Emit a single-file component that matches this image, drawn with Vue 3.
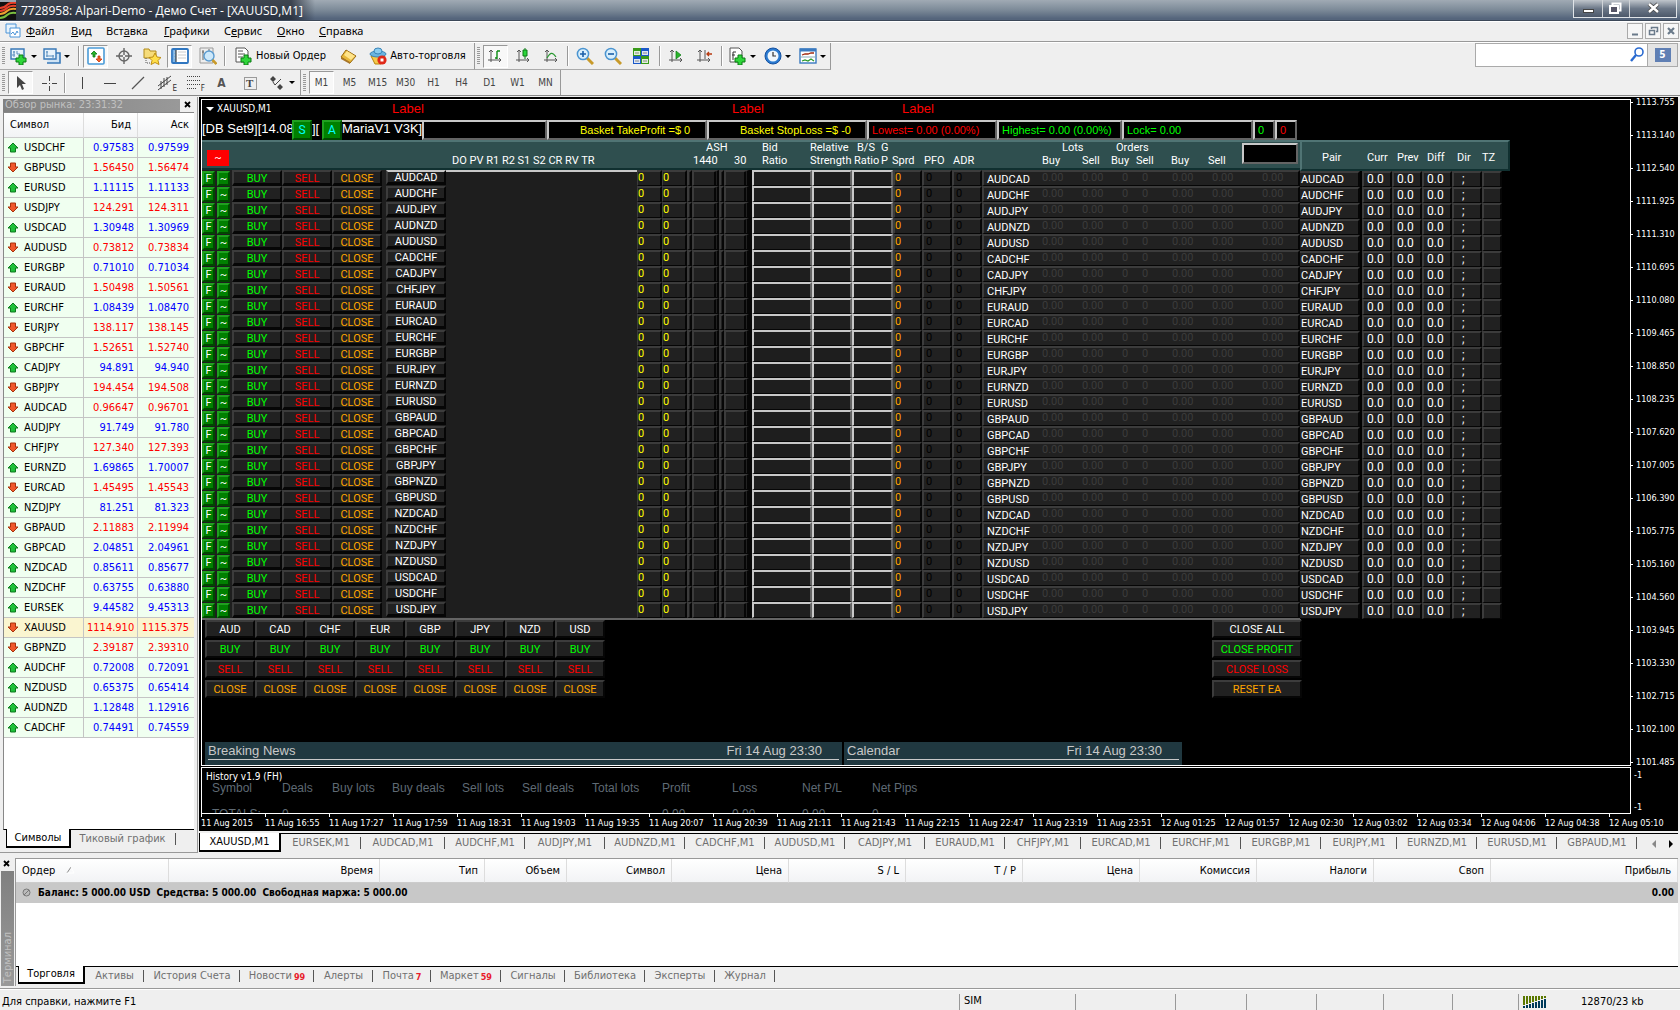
<script setup>
const menu = [
  ['', 'Ф', 'айл', 45], ['', 'В', 'ид', 35], ['Вст', 'а', 'вка', 58], ['', 'Г', 'рафики', 60],
  ['С', 'е', 'рвис', 53], ['', 'О', 'кно', 42], ['', 'С', 'правка', 60],
]

const axes = '<path d="M4 15V3M2 5l2-2 2 2M1 13h13M12 11l2 2-2 2" fill="none" stroke="#555" stroke-width="1"/>'
const plus = '<path d="M9 8h4v3h3v4h-3v3H9v-3H6v-4h3z" fill="#2fd53a" stroke="#0a7a12" stroke-width="1"/>'
const icons = {
  newChart: '<path d="M1 2h13v10H1z" fill="#e8f3fb" stroke="#3a7ab8" stroke-width="1.4"/><path d="M4 4v6M3 5h2M2 8h3M7 4v3h3" stroke="#5a8fbf" fill="none"/>' + plus,
  profiles: '<path d="M6 6h11v10H4" fill="#cfe3f4" stroke="#3a7ab8" stroke-width="1.6"/><path d="M1 2h12v10H1z" fill="#e8f3fb" stroke="#3a7ab8" stroke-width="1.4"/><path d="M3 5h2M4 4v6M3 9h8M10 8v3" stroke="#5a8fbf" fill="none"/>',
  market: '<rect x="1" y="1" width="16" height="16" rx="1" fill="#fff" stroke="#4a9bd8" stroke-width="1.6"/><path d="M7 4l3 3H8v3H6V7H4z" fill="#2ab52a" stroke="#0a7a12" stroke-width=".8"/><path d="M12 15l3-3h-2V9h-2v3H9z" fill="#f0642a" stroke="#c83208" stroke-width=".8"/>',
  cross: '<circle cx="9" cy="9" r="5" fill="none" stroke="#666" stroke-width="1.4"/><path d="M9 1v7M9 10v7M1 9h7M10 9h7" stroke="#666" stroke-width="1.4"/>',
  navigator: '<path d="M1 2h5l1 2h6v7H1z" fill="#f6dc7a" stroke="#b08a1a"/><path d="M3 11v5h4" stroke="#555" stroke-dasharray="1 1" fill="none"/><path d="M12 6l2 4 4 .5-3 3 1 4-4-2-4 2 1-4-3-3 4-.5z" fill="#ffdf4a" stroke="#b8860b" stroke-width=".9"/>',
  terminal: '<rect x="1" y="2" width="16" height="14" rx="1" fill="#fff" stroke="#2f76c0" stroke-width="1.8"/><path d="M2 3h3v12H2z" fill="#7ab4e8"/><path d="M3 5h1M3 8h1M3 11h1M7 5h8M7 8h8M7 11h8" stroke="#ccc"/><path d="M5 3v12" stroke="#222"/>',
  tester: '<path d="M1 1h13v15H1z" fill="#eee" stroke="#999"/><path d="M4 3v10M3 5h2M10 2v5" stroke="#666"/><circle cx="10" cy="9" r="5" fill="#cde8fa" stroke="#5a9bd0" stroke-width="1.4"/><path d="M13.500 13l4 4" stroke="#c89a2a" stroke-width="2.6"/>',
  order: '<path d="M1 1h9l3 3v11H1z" fill="#fff" stroke="#555"/><path d="M3 4h5M3 7h7M3 10h5" stroke="#555"/>' + plus,
  editor: '<path d="M2 10l5-7 10 6-6 7z" fill="#e8b83a" stroke="#9a6a10"/><path d="M5 8l3-4 8 5-4 4z" fill="#ffe48a"/><path d="M2 10v2l9 5v-2z" fill="#a8762a"/>',
  auto: '<path d="M2 9h14l-4 8H6z" fill="#f4c84a" stroke="#b8860b"/><ellipse cx="9" cy="7" rx="8" ry="3" fill="#6ab4e0" stroke="#3a84b8"/><ellipse cx="9" cy="4" rx="4" ry="3" fill="#8accf0" stroke="#3a84b8"/><circle cx="13" cy="13" r="4.600" fill="#e02818"/><path d="M11.500 11.500h3v3h-3z" fill="#fff"/>',
  bars: axes + '<path d="M10 4v8M10 4h3M8 11h2" stroke="#0a8a12" stroke-width="1.4" fill="none"/>',
  candles: axes + '<path d="M10 1v11" stroke="#0a7a12"/><path d="M8 3h4v6H8z" fill="#2ad53a" stroke="#0a7a12"/>',
  line: axes + '<path d="M4 11c3-5 5-7 9-1" stroke="#2a9a32" stroke-width="1.2" fill="none"/>',
  zoomIn: '<path d="M11 11l6 6" stroke="#c89a2a" stroke-width="3"/><circle cx="7" cy="7" r="5.600" fill="#d8effc" stroke="#4a94d0" stroke-width="1.500"/><path d="M4 7h6M7 4v6" stroke="#1a5fa8" stroke-width="1.600"/>',
  zoomOut: '<path d="M11 11l6 6" stroke="#c89a2a" stroke-width="3"/><circle cx="7" cy="7" r="5.600" fill="#d8effc" stroke="#4a94d0" stroke-width="1.500"/><path d="M4 7h6" stroke="#1a5fa8" stroke-width="1.600"/>',
  tile: '<path d="M1 1h8v8H1zM9 9h8v8H9z" fill="#3a9a1a"/><path d="M9 1h8v8H9zM1 9h8v8H1z" fill="#1a58c8"/><path d="M2 4h6v4H2zM10 4h6v4h-6zM2 12h6v4H2zM10 12h6v4h-6z" fill="#fff" opacity=".85"/><path d="M3 6h4M11 6h4M3 14h4M11 14h4" stroke="#888"/>',
  scroll: axes + '<path d="M8 4l5 4-5 4z" fill="#2ab52a" stroke="#0a7a12" stroke-width=".7"/>',
  shift: axes + '<path d="M9 3v9" stroke="#555"/><path d="M16 7h-5M13 5l-2 2 2 2" stroke="#b83a10" stroke-width="1.400" fill="none"/>',
  indicators: '<path d="M1 1h9l3 3v11H1z" fill="#fff" stroke="#555"/><path d="M4 13V5h3M3 8h3" stroke="#333" fill="none"/>' + plus,
  clock: '<circle cx="9" cy="9" r="8" fill="#2a7ad0" stroke="#1450a0"/><circle cx="9" cy="9" r="5.500" fill="#eef6fc"/><path d="M9 5v4h3" stroke="#333" stroke-width="1.200" fill="none"/>',
  templates: '<rect x="1" y="2" width="16" height="14" fill="#fff" stroke="#3a7ac0" stroke-width="1.400"/><path d="M1 3h16" stroke="#3a7ac0" stroke-width="3"/><path d="M3 8l3-1h3l3-1h3" stroke="#a02a10" stroke-width="1.300" fill="none"/><path d="M1 10h16" stroke="#8ab"/><path d="M3 14l3-1 3 1 3-2 3 2" stroke="#2a9a2a" stroke-width="1.200" fill="none"/>',
  cursor: '<path d="M5 2v12l3-3 2 5 2-1-2-5h4z" fill="#444"/>',
  thinCross: '<path d="M9.500 2v5M9.500 12v5M2 9.500h5M12 9.500h5M9 9.500h1" stroke="#444"/>',
  vline: '<path d="M9.500 3v12" stroke="#444"/>',
  hline: '<path d="M3 9.500h12" stroke="#444"/>',
  trend: '<path d="M3 15L15 3" stroke="#555" stroke-width="1.200"/>',
  channel: '<path d="M1 12L14 2M1 16L14 6M4 7v8M7 4v9M10 3v8" stroke="#444"/>',
  fibo: '<path d="M2 2.500h14M2 6.500h14M2 10.500h14M2 14.500h9" stroke="#444" stroke-dasharray="1 1"/>',
  textBox: '<rect x="3.500" y="3.500" width="12" height="12" fill="none" stroke="#444" stroke-dasharray="1 1"/>',
  arrows: '<path d="M5 2l3 3-3 3-3-3zM12 10l3 3-3 3-3-3z" fill="#444"/><path d="M5 8l2 3 6-6" stroke="#444" fill="none"/>',
}
const group1 = [
  { i: 'newChart', w: 30, drop: 1 }, { i: 'profiles', w: 31, drop: 1 }, { sep: 3 },
  { i: 'market', w: 25, on: 1 }, { i: 'cross', w: 25 }, { i: 'navigator', w: 25 }, { i: 'terminal', w: 25, on: 1 }, { i: 'tester', w: 25 }, { sep: 1 },
  { i: 'order', w: 103, t: 'Новый Ордер' }, { i: 'editor', w: 25 }, { i: 'auto', w: 109, t: 'Авто-торговля' },
]
const group2 = [
  { i: 'bars', w: 25, on: 1 }, { i: 'candles', w: 25 }, { i: 'line', w: 25 }, { sep: 0 },
  { i: 'zoomIn', w: 25 }, { i: 'zoomOut', w: 25 }, { i: 'tile', w: 25 }, { sep: 3 },
  { i: 'scroll', w: 25 }, { i: 'shift', w: 25 }, { sep: 1 },
  { i: 'indicators', w: 32, drop: 1 }, { i: 'clock', w: 32, drop: 1 }, { i: 'templates', w: 32, drop: 1 },
]
const group3 = [
  { i: 'cursor', w: 25, on: 1 }, { i: 'thinCross', w: 25 }, { sep: 0 },
  { i: 'vline', w: 25 }, { i: 'hline', w: 25 }, { i: 'trend', w: 25 }, { i: 'channel', w: 25, s: 'E' },
  { i: 'fibo', w: 25, s: 'F' }, { g: 'A', w: 25 }, { i: 'textBox', w: 25, o: 'T' }, { i: 'arrows', w: 33, drop: 1 },
]
const frames = ['M1', 'M5', 'M15', 'M30', 'H1', 'H4', 'D1', 'W1', 'MN']

const quotes = `USDCHF u 0.97583 0.97599
GBPUSD d 1.56450 1.56474
EURUSD u 1.11115 1.11133
USDJPY d 124.291 124.311
USDCAD u 1.30948 1.30969
AUDUSD d 0.73812 0.73834
EURGBP u 0.71010 0.71034
EURAUD d 1.50498 1.50561
EURCHF u 1.08439 1.08470
EURJPY d 138.117 138.145
GBPCHF d 1.52651 1.52740
CADJPY u 94.891 94.940
GBPJPY d 194.454 194.508
AUDCAD d 0.96647 0.96701
AUDJPY u 91.749 91.780
CHFJPY d 127.340 127.393
EURNZD u 1.69865 1.70007
EURCAD d 1.45495 1.45543
NZDJPY u 81.251 81.323
GBPAUD d 2.11883 2.11994
GBPCAD u 2.04851 2.04961
NZDCAD u 0.85611 0.85677
NZDCHF u 0.63755 0.63880
EURSEK u 9.44582 9.45313
XAUUSD d 1114.910 1115.375
GBPNZD d 2.39187 2.39310
AUDCHF u 0.72008 0.72091
NZDUSD u 0.65375 0.65414
AUDNZD u 1.12848 1.12916
CADCHF u 0.74491 0.74559`.split('\n').map((l) => {
  const [sym, dir, bid, ask] = l.split(' ')
  return { sym, up: dir === 'u', bid, ask }
})

const pairs = ('AUDCAD AUDCHF AUDJPY AUDNZD AUDUSD CADCHF CADJPY CHFJPY EURAUD EURCAD EURCHF EURGBP EURJPY EURNZD EURUSD ' +
  'GBPAUD GBPCAD GBPCHF GBPJPY GBPNZD GBPUSD NZDCAD NZDCHF NZDJPY NZDUSD USDCAD USDCHF USDJPY').split(' ')
const cols = [15, 15, 50, 50, 50, 4, 60, 191, 25, 25, 5, 27, 5, 25, 3, 60, 40, 41, 29, 30, 30, 318]
const lots = [['0.00', 40], ['0.00', 40], ['0', 20], ['0', 30], ['0.00', 40], ['0.00', 50], ['0.00', 30]]
const heads = [
  ['', '', 250], ['', 'DO PV R1 R2 S1 S2 CR RV TR', 241], ['ASH', '1440', 41, 13], ['', '30', 28], ['Bid', 'Ratio', 48],
  ['Relative', 'Strength', 44], ['B/S', 'Ratio', 27, 3], ['G', 'P', 11], ['', 'Sprd', 32], ['', 'PFO', 29], ['', 'ADR', 89],
  ['Lots', 'Buy', 40, 20], ['', 'Sell', 29], ['Orders', 'Buy', 25, 5], ['', 'Sell', 35], ['', 'Buy', 37], ['', 'Sell', 34],
]
const currencies = ['AUD', 'CAD', 'CHF', 'EUR', 'GBP', 'JPY', 'NZD', 'USD']
const closers = [['CLOSE ALL', 'white'], ['CLOSE PROFIT', 'lime'], ['CLOSE LOSS', 'red'], ['RESET EA', 'orange']]
const prices = ('1113.755 1113.140 1112.540 1111.925 1111.310 1110.695 1110.080 1109.465 1108.850 1108.235 1107.620 ' +
  '1107.005 1106.390 1105.775 1105.160 1104.560 1103.945 1103.330 1102.715 1102.100 1101.485').split(' ')
const times = ['11 Aug 2015', ...'16:55 17:27 17:59 18:31 19:03 19:35 20:07 20:39 21:11 21:43 22:15 22:47 23:19 23:51'.split(' ').map((t) => '11 Aug ' + t),
  ...'01:25 01:57 02:30 03:02 03:34 04:06 04:38 05:10'.split(' ').map((t) => '12 Aug ' + t)]
const history = [['Symbol', 'TOTALS:', 70], ['Deals', '0', 50], ['Buy lots', '', 60], ['Buy deals', '', 70], ['Sell lots', '', 60], ['Sell deals', '', 70],
  ['Total lots', '', 70], ['Profit', '0.00', 70], ['Loss', '0.00', 70], ['Net P/L', '0.00', 70], ['Net Pips', '0', 70]]
const chartTabs = [['EURSEK', 80], ['AUDCAD', 84], ['AUDCHF', 80], ['AUDJPY', 80], ['AUDNZD', 80], ['CADCHF', 80], ['AUDUSD', 80], ['CADJPY', 80],
  ['EURAUD', 80], ['CHFJPY', 76], ['EURCAD', 80], ['EURCHF', 80], ['EURGBP', 80], ['EURJPY', 76], ['EURNZD', 80], ['EURUSD', 80], ['GBPAUD', 80]]
const orderCols = [['Время', 211], ['Тип', 105], ['Объем', 82], ['Символ', 105], ['Цена', 117], ['S / L', 117], ['T / P', 117], ['Цена', 117],
  ['Комиссия', 117], ['Налоги', 117], ['Своп', 117]]
const termTabs = [['Активы', '', 59], ['История Счета', '', 96], ['Новости', '99', 74], ['Алерты', '', 59], ['Почта', '7', 58], ['Маркет', '59', 70],
  ['Сигналы', '', 64], ['Библиотека', '', 80], ['Эксперты', '', 70], ['Журнал', '', 60]]
const statusCells = [116, 100, 71, 70, 67, 69, 66]
const px = (n) => ({ width: n + 'px' })
</script>

<template>
  <div class="app">
    <header class="titlebar">
      <svg class="logo" width="16" height="18" viewBox="0 0 16 18"><rect width="16" height="18" fill="#111" /><g fill="none" stroke-width="2"><path d="M0 6q4 0 7-3t9-2M0 9q4 0 7-3t9-2" stroke="#e8402a" /><path d="M0 12q4 0 7-3t9-2" stroke="#f0a030" /><path d="M0 16q4 0 7-3t9-2" stroke="#7cc040" /></g></svg>
      <h1>7728958: Alpari-Demo - Демо Счет - [XAUUSD,M1]</h1>
      <div class="winbtns">
        <button aria-label="Minimize"><svg width="28" height="17"><rect x="9.500" y="9.500" width="10" height="3" fill="#fff" stroke="#444" /></svg></button>
        <button aria-label="Restore"><svg width="26" height="17"><path d="M9.500 3.500h8v7h-8z" fill="none" stroke="#fff" stroke-width="2" /><path d="M7 6h8v7H7z" fill="#556" stroke="#fff" stroke-width="2" /></svg></button>
        <button aria-label="Close"><svg width="46" height="17"><path d="M19 4l9 8M28 4l-9 8" stroke="#444" stroke-width="4" /><path d="M19 4l9 8M28 4l-9 8" stroke="#fff" stroke-width="2.500" /></svg></button>
      </div>
    </header>

    <nav class="menu">
      <svg width="16" height="16" viewBox="0 0 16 16"><path d="M1 1h10v9H1z" fill="#e8f3fb" stroke="#4a94d8" /><path d="M5 5h10v9H5z" fill="#fff" stroke="#4a94d8" /><path d="M6 11l2-2 2 3 2-4 1 2" stroke="#4a94d8" fill="none" /></svg>
      <a v-for="m in menu" :key="m[1] + m[2]" href="#" :style="px(m[3])">{{ m[0] }}<u>{{ m[1] }}</u>{{ m[2] }}</a>
      <div class="mdibtns">
        <button aria-label="Minimize chart"><svg width="14" height="14"><path d="M4 10.500h6" stroke="#6a7a8a" stroke-width="2" /></svg></button>
        <button aria-label="Restore chart"><svg width="14" height="14"><path d="M5.500 5V3.500h6v4H10" stroke="#6a7a8a" fill="none" stroke-width="1.500" /><path d="M3.500 6.500h5v4h-5z" stroke="#6a7a8a" fill="none" stroke-width="1.500" /></svg></button>
        <button aria-label="Close chart"><svg width="14" height="14"><path d="M4 4l6 6M10 4l-6 6" stroke="#6a7a8a" stroke-width="2.200" /></svg></button>
      </div>
    </nav>

    <div class="toolbar">
      <div v-for="(g, gi) in [group1, group2]" :key="gi" class="tgroup">
        <i class="grip"></i>
        <template v-for="(b, k) in g" :key="k">
          <i v-if="b.i === undefined" class="sep" :style="{ marginLeft: b.sep + 'px' }"></i>
          <button v-else class="tb" :class="{ on: b.on }" :style="px(b.w)" :aria-label="b.t || b.i">
            <svg width="18" height="18" viewBox="0 0 18 18" v-html="icons[b.i]"></svg>
            <span v-if="b.t">{{ b.t }}</span><i v-if="b.drop" class="drop"></i>
          </button>
        </template>
      </div>
      <div class="search">
        <input type="text" aria-label="Search">
        <svg width="16" height="16" viewBox="0 0 16 16"><circle cx="10" cy="5" r="4" fill="#fff" stroke="#2a6ad0" stroke-width="1.600" /><path d="M7 8l-5 6" stroke="#2a6ad0" stroke-width="2.400" /></svg>
        <button aria-label="Messages"><b>5</b></button>
      </div>
    </div>

    <div class="toolbar second">
      <div class="tgroup">
        <i class="grip"></i>
        <template v-for="(b, k) in group3" :key="k">
          <i v-if="b.sep !== undefined" class="sep"></i>
          <button v-else class="tb" :class="{ on: b.on }" :style="px(b.w)" :aria-label="b.i || 'text'">
            <b v-if="b.g" class="glyph">{{ b.g }}</b>
            <svg v-else width="18" height="18" viewBox="0 0 18 18" v-html="icons[b.i]"></svg>
            <small v-if="b.s">{{ b.s }}</small><b v-if="b.o" class="over">{{ b.o }}</b><i v-if="b.drop" class="drop"></i>
          </button>
        </template>
      </div>
      <div class="tgroup">
        <i class="grip"></i>
        <button v-for="f in frames" :key="f" class="tb frame" :class="{ on: f === 'M1' }">{{ f }}</button>
      </div>
    </div>

    <main class="workspace">
      <section class="market">
        <div class="mtitle"><span>Обзор рынка: 23:31:32</span><button aria-label="Close panel"><svg width="8" height="8"><path d="M1 1l5 5M6 1L1 6" stroke="#000" stroke-width="1.800" /></svg></button></div>
        <div class="mbox">
          <table>
            <colgroup><col style="width: 80px"><col style="width: 54px"><col></colgroup>
            <thead><tr><th>Символ</th><th>Бид</th><th>Аск</th></tr></thead>
            <tbody>
              <tr v-for="q in quotes" :key="q.sym" :class="{ up: q.up, sel: q.sym === 'XAUUSD' }">
                <td><svg width="12" height="12" viewBox="0 0 12 12"><path v-if="q.up" d="M6 1l5 5H8.500v4h-5V6H1z" fill="#1fc03a" stroke="#0c7a1c" /><path v-else d="M6 10l5-5H8.500V1h-5v4H1z" fill="#f0582a" stroke="#a8320c" /></svg>{{ q.sym }}</td>
                <td>{{ q.bid }}</td><td>{{ q.ask }}</td>
              </tr>
            </tbody>
          </table>
        </div>
        <div class="tabs mtabs"><button class="active">Символы</button><button class="tick">Тиковый график</button></div>
      </section>

      <section class="right">
        <div class="chart">
          <div class="plots">
            <div class="plot">
              <div class="ctitle"><i class="tri"></i><span class="sym">XAUUSD,M1</span><span class="l1">Label</span><span class="l2">Label</span><span>Label</span></div>
              <div class="eabar">
                <span class="ea">[DB Set9][14.08</span><button class="green">S</button><span class="mid">][</span><button class="green">A</button>
                <div class="ed maria" :style="px(80)">MariaV1 V3K]</div>
                <div class="ed" :style="px(125)"></div>
                <div class="ed yellow" :style="px(160)">Basket TakeProfit =$ 0</div>
                <div class="ed yellow" :style="px(160)">Basket StopLoss =$ -0</div>
                <div class="ed red" :style="px(130)">Lowest= 0.00 (0.00%)</div>
                <div class="ed lime" :style="px(125)">Highest= 0.00 (0.00%)</div>
                <div class="ed lime" :style="px(131)">Lock= 0.00</div>
                <div class="ed lime" :style="px(22)">0</div>
                <div class="ed red" :style="px(22)">0</div>
              </div>
              <div class="dash">
                <div class="left">
                  <div class="head">
                    <div v-for="(h, k) in heads" :key="k" :style="px(h[2])">
                      <button v-if="k === 0" class="redbtn">~</button>
                      <template v-else><span :style="{ paddingLeft: (h[3] || 0) + 'px' }">{{ h[0] }}&nbsp;</span><span>{{ h[1] }}</span></template>
                    </div>
                    <input type="text" aria-label="Value">
                  </div>
                  <table class="grid">
                    <colgroup><col v-for="(c, k) in cols" :key="k" :style="px(c)"></colgroup>
                    <tbody>
                      <tr v-for="p in pairs" :key="p">
                        <td><button class="green f">F</button></td><td><button class="green f">~</button></td>
                        <td><button class="dk lime">BUY</button></td><td><button class="dk red">SELL</button></td><td><button class="dk orange">CLOSE</button></td>
                        <td></td><td><button class="dk white pr">{{ p }}</button></td><td class="fill"></td>
                        <td class="cell yellow">0</td><td class="cell yellow">0</td><td class="cell"></td><td class="cell thick"></td><td class="cell"></td><td class="cell thick"></td><td class="void"></td>
                        <td class="lite"></td><td class="lite"></td><td class="lite"></td>
                        <td class="cell orange">0</td><td class="cell blk">0</td><td class="cell blk">0</td>
                        <td class="cell"><div class="lots"><span class="white">{{ p }}</span><span v-for="(l, k) in lots" :key="k" :style="px(l[1])">{{ l[0] }}</span></div></td>
                      </tr>
                    </tbody>
                  </table>
                </div>
                <div class="pairs">
                  <div class="phead"><span :style="px(45)">Pair</span><span :style="px(30)">Curr</span><span :style="px(30)">Prev</span><span :style="px(30)">Diff</span><span :style="px(25)">Dir</span><span>TZ</span></div>
                  <table class="grid">
                    <colgroup><col style="width: 60px"><col style="width: 2px"><col style="width: 30px"><col style="width: 30px"><col style="width: 30px"><col style="width: 30px"><col style="width: 20px"></colgroup>
                    <tbody>
                      <tr v-for="p in pairs" :key="p"><td class="cell name">{{ p }}</td><td></td><td class="cell val">0.0</td><td class="cell val">0.0</td><td class="cell val">0.0</td><td class="cell semi">;</td><td class="cell"></td></tr>
                    </tbody>
                  </table>
                </div>
              </div>
              <div class="actions">
                <div class="cur">
                  <button v-for="c in currencies" :key="c" class="dk white">{{ c }}</button>
                  <button v-for="c in currencies" :key="c" class="dk lime">BUY</button>
                  <button v-for="c in currencies" :key="c" class="dk red">SELL</button>
                  <button v-for="c in currencies" :key="c" class="dk orange">CLOSE</button>
                </div>
                <div class="closers"><button v-for="c in closers" :key="c[0]" class="dk" :class="c[1]">{{ c[0] }}</button></div>
              </div>
              <div class="news">
                <div class="breaking"><h2><span>Breaking News</span><time>Fri 14 Aug 23:30</time></h2><p><em>12</em>Canadian<span>CFTC Speculative / Euro Large Traders Net</span></p></div>
                <div class="calendar"><h2><span>Calendar</span><time>Fri 14 Aug 23:30</time></h2><p><em>No further events scheduled</em></p></div>
              </div>
            </div>
            <div class="plot sub">
              <div class="hist">History v1.9 (FH)</div>
              <div class="hcols"><div v-for="h in history" :key="h[0]" :style="px(h[2])"><span>{{ h[0] }}</span><span>{{ h[1] }}</span></div></div>
            </div>
          </div>
          <div class="axis"><div class="pr1"><span v-for="p in prices" :key="p">{{ p }}</span></div><div class="pr2"><span>-1</span><span>-1</span></div></div>
          <div class="times"><span v-for="t in times" :key="t">{{ t }}</span></div>
        </div>
        <div class="tabs ctabs">
          <button class="active">XAUUSD,M1</button>
          <button v-for="t in chartTabs" :key="t[0]" :style="px(t[1])">{{ t[0] }},M1</button>
          <svg width="34" height="12"><path d="M15 2v8l-4-4z" fill="#888" /><path d="M28 2v8l4-4z" fill="#000" /></svg>
        </div>
      </section>
    </main>

    <section class="terminal">
      <aside><button aria-label="Close terminal"><svg width="8" height="8"><path d="M1 1l5 5M6 1L1 6" stroke="#000" stroke-width="1.800" /></svg></button><div><span>Терминал</span></div></aside>
      <div class="tmain">
        <table>
          <colgroup><col style="width: 153px"><col v-for="(c, k) in orderCols" :key="k" :style="px(c[1])"><col></colgroup>
          <thead><tr><th>Ордер <svg width="9" height="8"><path d="M1 7l4-6" stroke="#888" /><path d="M5 1l3 6H1" stroke="#fff" fill="none" /></svg></th><th v-for="(c, k) in orderCols" :key="k">{{ c[0] }}</th><th>Прибыль</th></tr></thead>
          <tbody><tr><td colspan="12"><svg width="9" height="9"><circle cx="4.500" cy="4.500" r="3.500" fill="#bbb" stroke="#777" /><path d="M2 7l5-5" stroke="#777" /></svg>Баланс: 5 000.00 USD&nbsp; Средства: 5 000.00&nbsp; Свободная маржа: 5 000.00</td><td>0.00</td></tr></tbody>
        </table>
        <div class="tabs ttabs"><button class="active">Торговля</button><button v-for="t in termTabs" :key="t[0]" :style="px(t[2])">{{ t[0] }}<b v-if="t[1]">{{ t[1] }}</b></button></div>
      </div>
    </section>

    <footer>
      <span class="help">Для справки, нажмите F1</span>
      <span v-for="(w, k) in statusCells" :key="k" class="sc" :style="px(w)">{{ k ? '' : 'SIM' }}</span>
      <span class="conn">
        <svg width="24" height="12"><g v-for="n in 8" :key="n"><rect :x="(n - 1) * 3" y="0" width="2" :height="10 - n" fill="#5a7800" /><rect :x="(n - 1) * 3" :y="11 - n" width="2" :height="n + 1" fill="#003a5a" /></g></svg>
        12870/23 kb
      </span>
    </footer>
  </div>
</template>

<style>
body { background: #efefef; }
</style>

<style scoped>
* { box-sizing: border-box; }
.app { min-height: 100vh; display: flex; flex-direction: column; background: #efefef; color: #000; font-family: "DejaVu Sans Condensed", "DejaVu Sans", sans-serif; font-size: 11px; line-height: 14px; white-space: nowrap; overflow: hidden; }
button, input { font: inherit; color: inherit; margin: 0; padding: 0; border: 0; background: none; border-radius: 0; }
button { display: block; text-align: center; }
table { border-collapse: separate; border-spacing: 0; table-layout: fixed; }
td, th { padding: 0; font-weight: normal; }
a { color: inherit; text-decoration: none; }
svg { display: block; flex: none; }

.titlebar { display: flex; height: 21px; background: linear-gradient(#a0aab4, #7c8a98 50%, #55657c 92%); border-bottom: 1px solid #3c4858; }
.titlebar h1 { margin: 0; padding: 1px 12px 0 5px; font: 12px/19px "Open Sans", sans-serif; color: #fff; background: linear-gradient(90deg, rgba(30, 36, 48, .75) 92%, transparent); }
.logo { margin-top: 2px; }
.winbtns { display: flex; margin: 0 3px 0 auto; height: 18px; border: 1px solid #e0e4e8; border-top: 0; background: linear-gradient(#c0c6cc, #6c7888 50%, #4c586a); }
.winbtns button + button { border-left: 1px solid #d0d4d8; }

.menu { display: flex; height: 21px; align-items: center; padding: 0 0 1px 5px; border-top: 1px solid #fff; border-bottom: 1px solid #999; font: 11px/16px "Noto Sans", sans-serif; }
.menu svg { margin-right: 5px; }
.mdibtns { display: flex; gap: 2px; margin: 0 1px 0 auto; }
.mdibtns button { border: 1px solid #aaa; background: #f6f6f6; width: 16px; height: 16px; }
.mdibtns svg { margin: 0; }

.toolbar { display: flex; height: 28px; border-top: 1px solid #fff; }
.toolbar.second { height: 26px; border-top: 0; border-bottom: 1px solid #888; }
.tgroup { display: flex; align-items: center; gap: 3px; padding: 0 2px; border-right: 1px solid #999; border-bottom: 1px solid #aaa; }
.second .tgroup { border-bottom: 0; }
.grip { width: 3px; height: 18px; background: repeating-linear-gradient(#999 0 1px, transparent 1px 2px); }
.sep { width: 2px; height: 20px; border-left: 1px solid #999; border-right: 1px solid #fff; }
.tb { position: relative; display: flex; align-items: center; justify-content: center; height: 23px; }
.tb.on { background: #f8f8f8; border: 1px solid #999; border-right-color: #fff; border-bottom-color: #fff; }
.tb span { padding-left: 3px; }
.drop { margin-left: 3px; border: 3px solid transparent; border-top-color: #000; border-bottom: 0; }
.tb small { position: absolute; right: 1px; bottom: 1px; font-size: 8px; line-height: 8px; color: #333; }
.glyph { color: #555; font-size: 12px; }
.over { position: absolute; left: 9px; color: #444; font-family: "Liberation Serif", serif; }
.frame { width: 25px; font-size: 10px; color: #444; }
.search { display: flex; align-items: center; margin: 0 2px auto auto; height: 24px; width: 203px; border: 1px solid #aaa; background: #fff; }
.search input { flex: 1; min-width: 0; height: 20px; outline: 0; }
.search button { margin-left: 2px; width: 30px; height: 22px; border-left: 1px solid #aaa; background: #e4e4e4; display: flex; justify-content: center; align-items: center; }
.search button b { width: 16px; height: 14px; background: #5f7fb4; color: #fff; font-size: 10px; line-height: 14px; }

.workspace { display: flex; padding-top: 1px; }
.market { width: 198px; display: flex; flex-direction: column; margin-bottom: 5px; border-right: 1px solid #999; border-bottom: 1px solid #999; padding: 1px 3px 2px; }
.mtitle { display: flex; align-items: center; height: 14px; }
.mtitle span { width: 177px; height: 13px; line-height: 12px; padding-left: 2px; color: #c0c0c0; background: linear-gradient(90deg, #808080, #999); }
.mtitle button { margin-left: 4px; }
.mbox { flex: 1; border: 1px solid #888; border-bottom-color: #000; border-right: 0; background: #fff; }
.mbox table { width: 100%; }
.mbox th { height: 25px; padding: 0 6px; text-align: right; border-right: 1px solid #ddd; border-bottom: 1px solid #ccc; background: linear-gradient(#fff, #f2f3f5); }
.mbox th:first-child { text-align: left; }
.mbox td { height: 20px; padding: 0 3px; text-align: right; color: #f00; border-right: 1px solid #c4c4c4; border-bottom: 1px solid #c4c4c4; background: #f0fff0; }
.mbox td:last-child, .mbox th:last-child { padding-right: 5px; border-right: 0; }
.mbox .up td { color: #00f; }
.mbox .sel td { background: #faf5d0; }
.mbox tr td:first-child { display: flex; align-items: center; gap: 5px; color: #000; }

.tabs { display: flex; height: 20px; color: #707070; }
.tabs button { height: 18px; position: relative; }
.tabs button:not(.active)::after { content: ""; position: absolute; right: 0; top: 3px; height: 12px; border-right: 1px solid #555; }
.tabs .active { height: 19px; margin-top: -1px; color: #000; background: #fff; border: solid #000; border-width: 0 2px 2px 1px; }
.mtabs .active { margin-left: 3px; width: 65px; }
.mtabs .tick { width: 105px; padding-right: 2px; }

.right { flex: 1; min-width: 0; padding: 0 2px 0 1px; }
.chart { display: grid; grid-template-columns: 1fr 47px; background: #000; padding: 2px 0 0 2px; font-family: Roboto, sans-serif; color: #fff; overflow: hidden; }
.plots { min-width: 0; display: flex; flex-direction: column; gap: 1px; }
.plot { height: 667px; border: 1px solid #fff; overflow: hidden; }
.plot.sub { height: 47px; }
.ctitle { display: flex; align-items: center; height: 20px; padding: 0 0 3px 4px; color: #f00; font: 13px/17px "Liberation Sans", sans-serif; }
.tri { border: 4px solid transparent; border-top-color: #fff; border-bottom: 0; margin-right: 3px; }
.sym { width: 175px; color: #fff; font: 10px/14px "DejaVu Sans Condensed", sans-serif; }
.l1 { width: 340px; }
.l2 { width: 170px; }
.eabar { display: flex; height: 20px; }
.ea, .mid, .maria { font: 13px/18px "Liberation Sans", sans-serif; }
.ea { width: 90px; }
.mid { width: 10px; }
.green { background: #008000; color: #0ff; border: 2px solid #20a020; border-right-color: #004800; border-bottom-color: #004800; }
.eabar .green { position: relative; width: 20px; font-size: 12px; }
.ed { border: 2px solid #c8c8c8; border-right-color: #646464; border-bottom-color: #646464; font: 11px/16px "Liberation Sans", sans-serif; padding-left: 3px; }
.ed.maria { padding: 0; border-width: 2px 0 0; font: 13px/14px "Liberation Sans", sans-serif; }
.ed.yellow { padding-left: 31px; }
.yellow { color: #ff0; } .red { color: #f00; } .lime { color: #0f0; } .orange { color: #ffa500; } .white { color: #fff; }

.dash { display: flex; font-size: 11px; line-height: 13px; }
.left { width: 1098px; }
.head { display: flex; height: 30px; background: #2f4f4f; border-top: 2px solid #507474; border-bottom: 2px solid #103030; }
.head div { flex: none; padding-top: 0; }
.head span { display: block; height: 13px; line-height: 12px; }
.head input { width: 56px; height: 21px; margin-top: 1px; background: #000; border: 2px solid #c8c8c8; border-right-color: #646464; border-bottom-color: #646464; }
.redbtn { margin: 8px 0 0 5px; width: 22px; height: 16px; background: #f00; color: #fff; line-height: 12px; }
.grid { width: 100%; }
.grid tr { height: 16px; }
.grid td { height: 16px; line-height: 11px; overflow: hidden; vertical-align: top; }
.left .grid { background: #1e1e1e; border-bottom: 2px solid #646464; border-right: 1px solid #646464; }
.grid .green { width: 13px; height: 15px; margin-top: 1px; color: #fff; line-height: 11px; }
.dk { background: #212121; border: 2px solid #3c3c3c; border-right-color: #060606; border-bottom: 3px solid #060606; width: 100%; height: 16px; line-height: 11px; }
.grid .dk { padding-top: 1px; }
.grid .dk.pr { height: 15px; padding: 0; line-height: 11px; }
.fill { background: #1e1e1e; }
tr:first-child .fill, tr:first-child .pr { border-top: 2px solid #c8c8c8; }
.cell { background: #212121; border: 2px solid #3c3c3c; border-right-color: #060606; border-bottom: 1px solid #060606; }
.cell.yellow { border-left-width: 1px; }
.cell.thick { border-right: 5px double #060606; }
.cell.blk { color: #000; padding-left: 2px; }
.void { background: #060606; }
.lite { border: 2px solid #c8c8c8; border-right-color: #646464; border-bottom: 1px solid #060606; background: #1e1e1e; }
.lots { display: flex; color: #3c3c3c; padding-left: 3px; }
.lots .white { width: 55px; padding-top: 2px; }
.pairs { width: 210px; }
.phead { display: flex; height: 31px; padding: 9px 0 0 20px; background: #2f4f4f; border: 2px solid #507474; border-right-color: #103030; border-bottom-color: #103030; }
.pairs .grid { width: 202px; }
.pairs .grid td { line-height: 13px; }
.pairs .name { border-left: 0; padding-left: 1px; }
.pairs .val { font-size: 12px; padding-left: 3px; }
.pairs .semi { padding-left: 8px; font-size: 12px; }
.actions { display: flex; justify-content: flex-start; gap: 607px; padding-left: 3px; height: 122px; }
.cur { display: grid; grid-template-columns: repeat(8, 50px); grid-auto-rows: 20px; width: 400px; font-size: 11px; }
.closers { display: grid; grid-auto-rows: 20px; width: 90px; font-size: 11px; }
.actions .dk { height: 18px; line-height: 13px; border-bottom-width: 2px; }
.news { display: flex; gap: 2px; padding-left: 3px; font: 13px/17px "Liberation Sans", sans-serif; color: #c8c8c8; }
.news > div { height: 30px; background: #203840; padding: 0 3px; }
.breaking { width: 637px; }
.calendar { width: 338px; }
.news h2 { display: flex; justify-content: space-between; margin: 0; padding-right: 17px; font: inherit; height: 18px; border-bottom: 1px solid #c8c8c8; }
.news p { margin: 3px 0 0; padding-left: 4px; font-size: 12px; line-height: 14px; }
.news em { font-style: normal; color: #0f0; margin-right: 28px; }
.news p span { margin-left: 80px; }
.hist { padding: 3px 0 0 4px; font: 10px/12px "DejaVu Sans Condensed", sans-serif; }
.hcols { display: flex; padding-left: 10px; color: #5f6a74; font: 12px/14px "Liberation Sans", sans-serif; }
.hcols div { flex: none; margin-top: -2px; }
.hcols span { display: block; height: 26px; }
.axis { font: 9px/11px "DejaVu Sans Condensed", sans-serif; }
.axis span { display: block; height: 33px; padding-left: 5px; position: relative; }
.pr1 { height: 662px; margin-top: -2px; }
.pr1 span::before { content: ""; position: absolute; left: 0; top: 5px; width: 2px; height: 1px; background: #fff; }
.pr2 { padding-top: 11px; height: 47px; }
.pr2 span { padding-left: 3px; height: 32px; }
.times { grid-column: 1 / 3; display: flex; height: 17px; overflow: hidden; font: 9px/11px "DejaVu Sans Condensed", sans-serif; }
.times span { flex: none; width: 64px; padding-top: 4px; position: relative; }
.times span::before { content: ""; position: absolute; left: 0; top: 0; width: 1px; height: 3px; background: #fff; }
.ctabs { margin-top: 2px; border-top: 1px solid #000; height: 25px; }
.ctabs button { flex: none; }
.ctabs .active { width: 82px; }
.ctabs svg { margin: 4px 0 0 4px; }

.terminal { flex: 1; display: flex; min-height: 130px; border-bottom: 1px solid #999; padding: 0 2px 2px 0; }
.terminal aside { width: 15px; display: flex; flex-direction: column; padding: 2px 1px 0; }
.terminal aside button { margin: 0 0 3px 2px; }
.terminal aside div { flex: 1; display: flex; align-items: flex-end; width: 13px; background: linear-gradient(#808080, #999); color: #c0c0c0; }
.terminal aside span { width: 13px; line-height: 13px; padding-top: 3px; writing-mode: vertical-rl; transform: rotate(180deg); }
.tmain { flex: 1; min-width: 0; display: flex; flex-direction: column; border: 1px solid #999; border-width: 1px 0 0 1px; background: linear-gradient(#fff, #fff) no-repeat 0 0 / 100% calc(100% - 20px); }
.tmain table { width: 100%; }
.tmain th { height: 24px; padding: 0 6px; text-align: right; border-right: 1px solid #ddd; border-bottom: 1px solid #ccc; background: linear-gradient(#fff, #f2f3f5); }
.tmain th:first-child { text-align: left; }
.tmain th svg { display: inline-block; margin-left: 8px; }
.tmain td { height: 20px; font-size: 10px; font-weight: bold; background: #c8c8c8; text-align: right; padding-right: 4px; }
.tmain td:first-child { text-align: left; padding-left: 6px; }
.tmain td svg { display: inline-block; margin-right: 7px; vertical-align: -1px; }
.ttabs { margin-top: auto; border-top: 1px solid #000; height: 20px; }
.ttabs .active { width: 67px; margin-left: 2px; height: 18px; }
.ttabs b { color: #e81c2c; font-size: 9px; line-height: 0; margin-left: 2px; vertical-align: -1px; }

footer { display: flex; height: 21px; align-items: center; padding: 3px 0 0 2px; border-top: 1px solid #fff; }
.help { flex: 1; }
.sc { height: 16px; padding-left: 4px; border-left: 1px solid #999; }
.conn { display: flex; align-items: center; width: 162px; height: 16px; gap: 34px; padding-left: 4px; border-left: 1px solid #999; }
</style>
